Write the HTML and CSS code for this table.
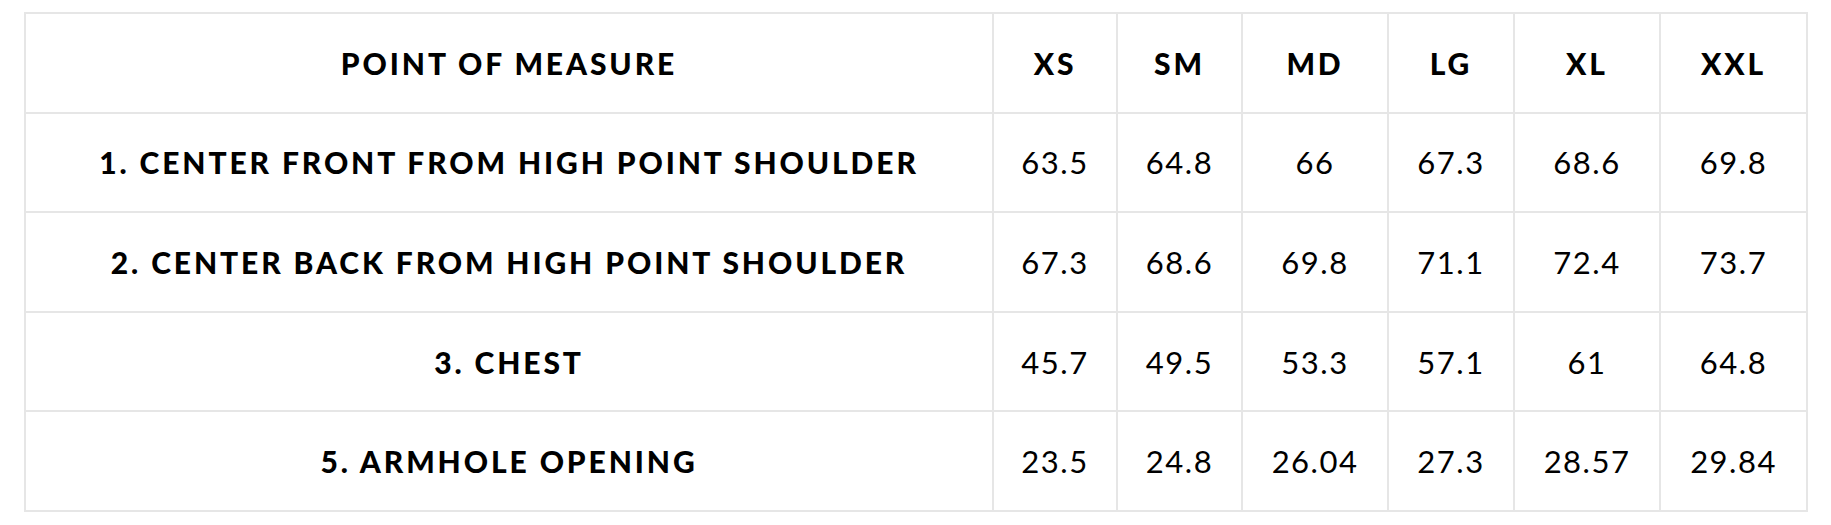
FILE: index.html
```html
<!DOCTYPE html>
<html lang="en">
<head>
<meta charset="utf-8">
<title>Size Chart</title>
<link rel="stylesheet" href="styles.css">
</head>
<body>
<div class="wrap">
<table class="size-table">
  <colgroup>
    <col class="c-pom">
    <col class="c-xs">
    <col class="c-sm">
    <col class="c-md">
    <col class="c-lg">
    <col class="c-xl">
    <col class="c-xxl">
  </colgroup>
  <thead>
    <tr>
      <th>POINT OF MEASURE</th>
      <th>XS</th>
      <th>SM</th>
      <th>MD</th>
      <th>LG</th>
      <th>XL</th>
      <th>XXL</th>
    </tr>
  </thead>
  <tbody>
    <tr>
      <th>1. CENTER FRONT FROM HIGH POINT SHOULDER</th>
      <td>63.5</td><td>64.8</td><td>66</td><td>67.3</td><td>68.6</td><td>69.8</td>
    </tr>
    <tr>
      <th>2. CENTER BACK FROM HIGH POINT SHOULDER</th>
      <td>67.3</td><td>68.6</td><td>69.8</td><td>71.1</td><td>72.4</td><td>73.7</td>
    </tr>
    <tr>
      <th>3. CHEST</th>
      <td>45.7</td><td>49.5</td><td>53.3</td><td>57.1</td><td>61</td><td>64.8</td>
    </tr>
    <tr>
      <th>5. ARMHOLE OPENING</th>
      <td>23.5</td><td>24.8</td><td>26.04</td><td>27.3</td><td>28.57</td><td>29.84</td>
    </tr>
  </tbody>
</table>
</div>
</body>
</html>
```

FILE: styles.css
```css
html, body {
  margin: 0;
  padding: 0;
  background: #ffffff;
}

.wrap {
  padding: 12px 25px 0 24px;
}

.size-table {
  width: 1782px;
  border-collapse: collapse;
  table-layout: fixed;
  font-family: "Lato", "Liberation Sans", sans-serif;
  color: #000000;
}

.c-pom { width: 968px; }
.c-xs { width: 124px; }
.c-sm { width: 125px; }
.c-md { width: 146px; }
.c-lg { width: 126px; }
.c-xl { width: 146px; }
.c-xxl { width: 147px; }

.size-table th,
.size-table td {
  border: 2px solid #e6e6e6;
  height: 97.6px;
  padding: 0;
  text-align: center;
  vertical-align: middle;
}

.size-table th {
  font-size: 30px;
  font-weight: 900;
  letter-spacing: 2.9px;
}

.size-table td {
  font-size: 31px;
  font-weight: 400;
  letter-spacing: 1.5px;
}
```
